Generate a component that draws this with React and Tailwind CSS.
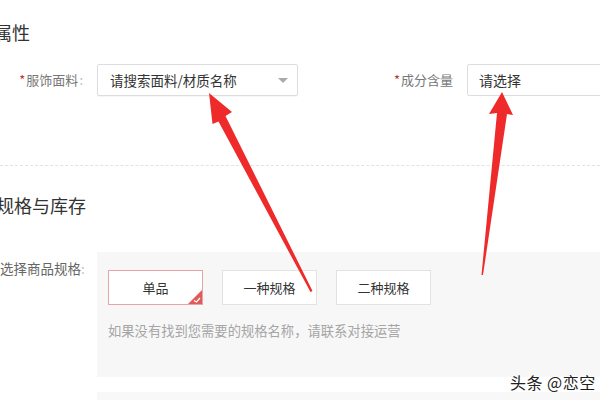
import React from "react";

const font = { fontFamily: '"Noto Sans CJK SC", "Noto Sans", sans-serif' };

export default function App() {
  return (
    <div className="relative w-[600px] h-[400px] overflow-hidden bg-white" style={font}>
      <div className="pt-[19px]">
        <div className="ml-[-6px] text-[18px] leading-[26px] text-[#333]">属性</div>
        <div className="mt-[19px] flex items-center h-[32px]">
          <div className="w-[97px] shrink-0 pr-[14px] text-right text-[13px] text-[#777] whitespace-nowrap">
            <span className="text-[#c0392b] mr-[1px]">*</span>服饰面料<span className="text-[#bbb] ml-[1px]">:</span>
          </div>
          <div className="w-[201px] shrink-0 h-[32px] border border-[#ddd] rounded-[2px] bg-white flex items-center justify-between pl-[12px] pr-[9px] shadow-[0_1px_1px_rgba(0,0,0,0.04)]">
            <span className="text-[13.5px] text-[#333] whitespace-nowrap">请搜索面料/材质名称</span>
            <span className="w-0 h-0 border-l-[5px] border-r-[5px] border-t-[5px] border-l-transparent border-r-transparent border-t-[#aaa]"></span>
          </div>
          <div className="ml-[96px] shrink-0 text-[13px] text-[#777] whitespace-nowrap">
            <span className="text-[#c0392b] mr-[1px]">*</span>成分含量
          </div>
          <div className="ml-[14px] w-[200px] shrink-0 h-[32px] border border-[#ddd] rounded-[2px] bg-white flex items-center pl-[11px]">
            <span className="text-[14px] text-[#333]">请选择</span>
          </div>
        </div>
        <div className="mt-[69px] border-t border-dashed border-[#e2e2e2]"></div>
        <div className="mt-[26px] ml-[-4px] text-[18px] leading-[26px] text-[#333]">规格与库存</div>
        <div className="mt-[34px] flex">
          <div className="w-[97px] shrink-0 pr-[13px] pt-[6px] text-right text-[13.5px] text-[#666] whitespace-nowrap">选择商品规格<span className="text-[#bbb]">:</span></div>
          <div className="flex-1 h-[125px] bg-[#f7f7f7] pt-[18px] pl-[11px]">
            <div className="flex gap-[19px]">
              <div className="relative w-[95px] h-[35px] bg-white border border-[#e3a5a5] flex items-center justify-center text-[13px] text-[#333] overflow-hidden">
                单品
                <svg className="absolute right-0 bottom-0" width="14" height="14" viewBox="0 0 14 14">
                  <polygon points="14,0 14,14 0,14" fill="#e05a5a" />
                  <polyline points="6,10.5 8.5,12 12,8" fill="none" stroke="#fff" strokeWidth="1.2" />
                </svg>
              </div>
              <div className="w-[95px] h-[35px] bg-white border border-[#e2e2e2] flex items-center justify-center text-[13px] text-[#333]">一种规格</div>
              <div className="w-[95px] h-[35px] bg-white border border-[#e2e2e2] flex items-center justify-center text-[13px] text-[#333]">二种规格</div>
            </div>
            <div className="mt-[16px] text-[13.3px] text-[#a5a5a5] whitespace-nowrap">如果没有找到您需要的规格名称，请联系对接运营</div>
          </div>
        </div>
        <div className="mt-[15px] ml-[97px] h-[20px] bg-[#f8f8f8]"></div>
      </div>

      <svg className="absolute left-0 top-0 pointer-events-none" width="600" height="400" viewBox="0 0 600 400">
        <polygon
          points="209,93 232,112 225.5,116 312.5,291 310.5,292 218.5,121.5 212.5,124"
          fill="#ee2a2a"
        />
        <polygon
          points="502,92 513,115 507,114 483,275 481.5,275 497,113 489,114"
          fill="#ee2a2a"
        />
      </svg>

      <div
        className="absolute left-[510px] top-[370px] text-[16px] text-[#222] tracking-[0.5px]"
        style={{ textShadow: "0 0 2px #fff, 0 0 2px #fff" }}
      >
        头条 @恋空
      </div>
    </div>
  );
}
